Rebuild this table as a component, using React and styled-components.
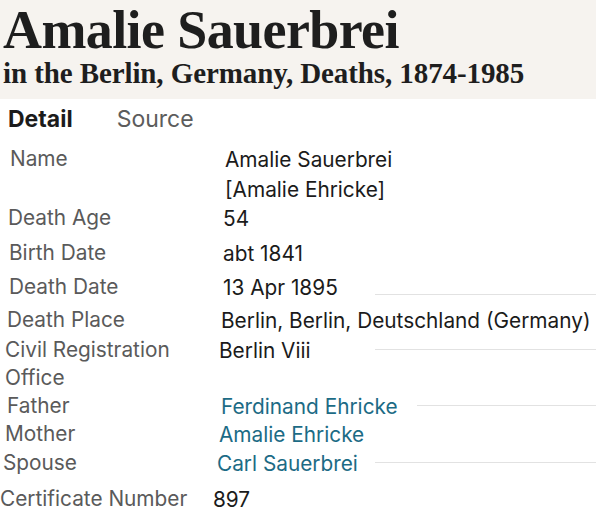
import styled, { createGlobalStyle } from 'styled-components';

const GlobalStyle = createGlobalStyle`
  html, body {
    margin: 0;
    padding: 0;
    background: #fff;
  }
  body {
    width: 596px;
    height: 516px;
    overflow: hidden;
  }
`;

const facts = [
  { label: ['Name'], value: ['Amalie Sauerbrei', '[Amalie Ehricke]'], lx: 10, vx: 225, h: 59 },
  { label: ['Death Age'], value: ['54'], lx: 8, vx: 223, h: 35 },
  { label: ['Birth Date'], value: ['abt 1841'], lx: 9, vx: 223, h: 34 },
  { label: ['Death Date'], value: ['13 Apr 1895'], lx: 9, vx: 223, h: 33, rule: { from: 375, at: 'bottom' } },
  { label: ['Death Place'], value: ['Berlin, Berlin, Deutschland (Germany)'], lx: 7, vx: 221, h: 30 },
  { label: ['Civil Registration', 'Office'], value: ['Berlin Viii'], lx: 5, vx: 219, h: 56, rule: { from: 375, at: 'top' } },
  { label: ['Father'], value: ['Ferdinand Ehricke'], lx: 7, vx: 221, h: 28, link: true, rule: { from: 417, at: 'center' } },
  { label: ['Mother'], value: ['Amalie Ehricke'], lx: 5, vx: 219, h: 29, link: true },
  { label: ['Spouse'], value: ['Carl Sauerbrei'], lx: 3, vx: 217, h: 36, link: true, rule: { from: 375, at: 'top' } },
  { label: ['Certificate Number'], value: ['897'], lx: 0, vx: 213, h: 30 },
];

const ruleTop = { bottom: 21, top: 13, center: 13 };

export default function App() {
  return (
    <Page>
      <GlobalStyle />
      <Header>
        <Title>Amalie Sauerbrei</Title>
        <Subtitle>in the Berlin, Germany, Deaths, 1874-1985</Subtitle>
      </Header>
      <TabBar>
        <Tab $active>Detail</Tab>
        <Tab>Source</Tab>
      </TabBar>
      <FactList>
        {facts.map((f) => (
          <FactRow key={f.label.join(' ')} $h={f.h}>
            <Label $x={f.lx} $vx={f.vx}>
              {f.label.map((l) => (
                <span key={l}>{l}</span>
              ))}
            </Label>
            <ValueCell>
              <Value $link={f.link}>
                {f.value.map((v) => (
                  <span key={v}>{v}</span>
                ))}
              </Value>
              {f.rule && <Rule $from={f.rule.from - f.vx} $top={ruleTop[f.rule.at]} />}
            </ValueCell>
          </FactRow>
        ))}
      </FactList>
    </Page>
  );
}

const Page = styled.div`
  width: 596px;
  height: 516px;
  background: #fff;
  font-family: Inter, 'Noto Sans', sans-serif;
`;

const Header = styled.header`
  background: #f6f3ef;
  padding: 0 0 0 3px;
  height: 99px;
  box-sizing: border-box;
`;

const Title = styled.h1`
  margin: 0;
  padding-top: 1px;
  font-family: 'Liberation Serif', 'Times New Roman', serif;
  font-weight: 700;
  font-size: 54px;
  line-height: 58px;
  letter-spacing: -0.6px;
  color: #1e1e1e;
`;

const Subtitle = styled.h2`
  margin: -2px 0 0;
  font-family: 'Liberation Serif', 'Times New Roman', serif;
  font-weight: 700;
  font-size: 29px;
  line-height: 32px;
  letter-spacing: -0.1px;
  color: #1e1e1e;
`;

const TabBar = styled.nav`
  display: flex;
  gap: 44px;
  width: 205px;
  height: 38px;
  padding: 5px 0 0 8px;
  box-sizing: border-box;
  background: #fff;
`;

const Tab = styled.div`
  font-size: 23px;
  line-height: 30px;
  font-weight: ${({ $active }) => ($active ? 700 : 400)};
  color: ${({ $active }) => ($active ? '#1b1b1b' : '#5c5c5c')};
`;

const FactList = styled.div`
  display: flex;
  flex-direction: column;
  padding-top: 8px;
`;

const FactRow = styled.div`
  display: flex;
  height: ${({ $h }) => $h}px;
  font-size: 20.8px;
`;

const Label = styled.div`
  display: flex;
  flex-direction: column;
  box-sizing: border-box;
  width: ${({ $vx }) => $vx}px;
  padding-left: ${({ $x }) => $x}px;
  line-height: 28px;
  color: #5a5a5a;
  flex-shrink: 0;
`;

const ValueCell = styled.div`
  flex: 1;
  display: flex;
  align-items: flex-start;
  position: relative;
`;

const Value = styled.div`
  display: flex;
  flex-direction: column;
  line-height: 30px;
  color: ${({ $link }) => ($link ? '#1c6b85' : '#1b1b1b')};
  white-space: nowrap;
`;

const Rule = styled.div`
  position: absolute;
  left: ${({ $from }) => $from}px;
  right: 0;
  top: ${({ $top }) => $top}px;
  height: 1px;
  background: #e2e2e2;
`;
